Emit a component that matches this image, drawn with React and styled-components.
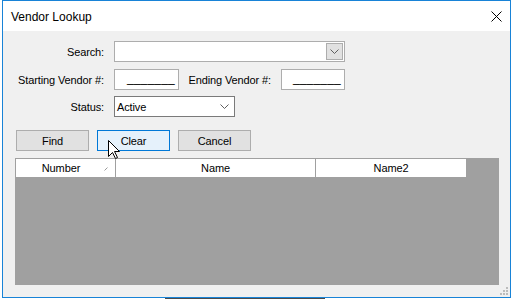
import React from "react";
import styled, { createGlobalStyle } from "styled-components";

const GlobalStyle = createGlobalStyle`
  html, body { margin: 0; padding: 0; background: #ffffff; }
  body { width: 513px; height: 299px; overflow: hidden; }
  * { box-sizing: border-box; }
`;

const FONT = `"Segoe UI", "Liberation Sans", Arial, sans-serif`;

const Screen = styled.div`
  position: relative;
  width: 513px;
  height: 299px;
  padding-left: 2px;
  font-family: ${FONT};
  font-size: 11px;
  letter-spacing: -0.12px;
  color: #000;
  display: flex;
  flex-direction: column;
`;

const Window = styled.div`
  width: 509px;
  height: 298px;
  flex: none;
  border: 1px solid #1883d7;
  background: #f0f0f0;
  display: flex;
  flex-direction: column;
`;

const TitleBar = styled.div`
  height: 30px;
  flex: none;
  background: #ffffff;
  display: flex;
  align-items: center;
  justify-content: space-between;
  padding: 0 8px 0 8px;
`;

const Title = styled.span`
  font-size: 12px;
  letter-spacing: 0;
  line-height: 14px;
  padding-top: 1px;
`;

const CloseGlyph = styled.svg`
  width: 11px;
  height: 11px;
  margin-top: 1px;
`;

const Client = styled.div`
  position: relative;
  flex: 1;
  display: flex;
  flex-direction: column;
  padding-top: 10px;
`;

const FormRow = styled.div`
  display: flex;
  align-items: center;
  height: 21px;
  margin-top: ${(p) => p.$gap || 0}px;
`;

const Label = styled.div`
  width: ${(p) => p.$w}px;
  margin-right: 10px;
  text-align: right;
  white-space: nowrap;
  flex: none;
  padding-top: 1px;
`;

const Field = styled.div`
  position: relative;
  width: ${(p) => p.$w}px;
  height: 21px;
  flex: none;
  background: #ffffff;
  border: 1px solid ${(p) => p.$border || "#adadad"};
  display: flex;
  align-items: center;
  justify-content: ${(p) => (p.$right ? "flex-end" : "flex-start")};
  padding: 0 3px 0 2px;
`;

const Mask = styled.span`
  font-family: "Liberation Sans", Arial, sans-serif;
  font-size: 12px;
  line-height: 12px;
  margin-top: -4px;
  letter-spacing: 0.2px;
`;

const DropButton = styled.div`
  position: absolute;
  right: 1px;
  top: 1px;
  width: 17px;
  height: 17px;
  background: #e1e1e1;
  border: 1px solid #adadad;
  display: flex;
  align-items: center;
  justify-content: center;
`;

const Chevron = styled.svg`
  width: 9px;
  height: 5px;
`;

const ChevronSlot = styled.div`
  margin-left: auto;
  margin-right: 2px;
  display: flex;
  align-items: center;
`;

const ButtonRow = styled.div`
  display: flex;
  gap: 8px;
  margin-top: 13px;
  padding-left: 13px;
`;

const Button = styled.div`
  width: 73px;
  height: 21px;
  display: flex;
  align-items: center;
  justify-content: center;
  border: 1px solid ${(p) => (p.$focused ? "#0078d7" : "#adadad")};
  background: ${(p) => (p.$focused ? "#e5f1fb" : "#e1e1e1")};
`;

const Grid = styled.div`
  margin: 7px 0 0 12px;
  width: 484px;
  height: 127px;
  background: #a0a0a0;
  padding: 1px;
`;

const HeaderRow = styled.div`
  display: flex;
  width: 450px;
  height: 18px;
  background: #ffffff;
`;

const HeaderCell = styled.div`
  position: relative;
  width: ${(p) => p.$w}px;
  height: 18px;
  display: flex;
  align-items: center;
  justify-content: center;
  padding-right: ${(p) => p.$pr || 0}px;
  border-right: ${(p) => (p.$last ? "none" : "1px solid #a0a0a0")};
`;

const SortMark = styled.svg`
  position: absolute;
  right: 7px;
  top: 8px;
  width: 4px;
  height: 4px;
`;

const Grip = styled.svg`
  position: absolute;
  right: 1px;
  bottom: 1px;
  width: 9px;
  height: 9px;
`;

const Cursor = styled.svg`
  position: absolute;
  left: 108px;
  top: 140px;
  width: 13px;
  height: 20px;
`;

const TaskStrip = styled.div`
  height: 1px;
  display: flex;
`;

const TaskSeg = styled.div`
  margin-left: 163px;
  width: 160px;
  background: #4b4b4b;
`;

const ChevronIcon = () => (
  <Chevron viewBox="0 0 9 5">
    <path d="M0.5 0.5 L4.5 4.5 L8.5 0.5" fill="none" stroke="#5f5f5f" strokeWidth="1" />
  </Chevron>
);

export default function App() {
  return (
    <>
      <GlobalStyle />
      <Screen>
        <Window>
          <TitleBar>
            <Title>Vendor Lookup</Title>
            <CloseGlyph viewBox="0 0 11 11">
              <path d="M0.5 0.5 L10.5 10.5 M10.5 0.5 L0.5 10.5" stroke="#000" strokeWidth="1" fill="none" />
            </CloseGlyph>
          </TitleBar>
          <Client>
            <FormRow>
              <Label $w={101}>Search:</Label>
              <Field $w={231}>
                <DropButton>
                  <ChevronIcon />
                </DropButton>
              </Field>
            </FormRow>
            <FormRow $gap={7}>
              <Label $w={101}>Starting Vendor #:</Label>
              <Field $w={65} $right>
                <Mask>_______</Mask>
              </Field>
              <Label $w={92}>Ending Vendor #:</Label>
              <Field $w={64} $right>
                <Mask>_______</Mask>
              </Field>
            </FormRow>
            <FormRow $gap={6}>
              <Label $w={101}>Status:</Label>
              <Field $w={121} $border="#7a7a7a">
                <span>Active</span>
                <ChevronSlot>
                  <ChevronIcon />
                </ChevronSlot>
              </Field>
            </FormRow>
            <ButtonRow>
              <Button>Find</Button>
              <Button $focused>Clear</Button>
              <Button>Cancel</Button>
            </ButtonRow>
            <Grid>
              <HeaderRow>
                <HeaderCell $w={100} $pr={9}>
                  Number
                  <SortMark viewBox="0 0 4 4">
                    <path d="M0.5 3.5 L3.5 0.5" stroke="#9a9a9a" strokeWidth="1" />
                  </SortMark>
                </HeaderCell>
                <HeaderCell $w={200}>Name</HeaderCell>
                <HeaderCell $w={150} $last>Name2</HeaderCell>
              </HeaderRow>
            </Grid>
            <Grip viewBox="0 0 9 9">
              <g fill="#bcbcbc">
                <rect x="6" y="0" width="2" height="2" />
                <rect x="3" y="3" width="2" height="2" />
                <rect x="6" y="3" width="2" height="2" />
                <rect x="0" y="6" width="2" height="2" />
                <rect x="3" y="6" width="2" height="2" />
                <rect x="6" y="6" width="2" height="2" />
              </g>
            </Grip>
          </Client>
        </Window>
        <TaskStrip>
          <TaskSeg />
        </TaskStrip>
        <Cursor viewBox="0 0 13 20">
          <path
            d="M0.5 0.5 L0.5 16.5 L4.5 12.5 L7.5 18.5 L9.5 17.5 L6.5 11.5 L11.5 11.5 Z"
            fill="#ffffff"
            stroke="#000000"
            strokeWidth="1"
            strokeLinejoin="miter"
          />
        </Cursor>
      </Screen>
    </>
  );
}
